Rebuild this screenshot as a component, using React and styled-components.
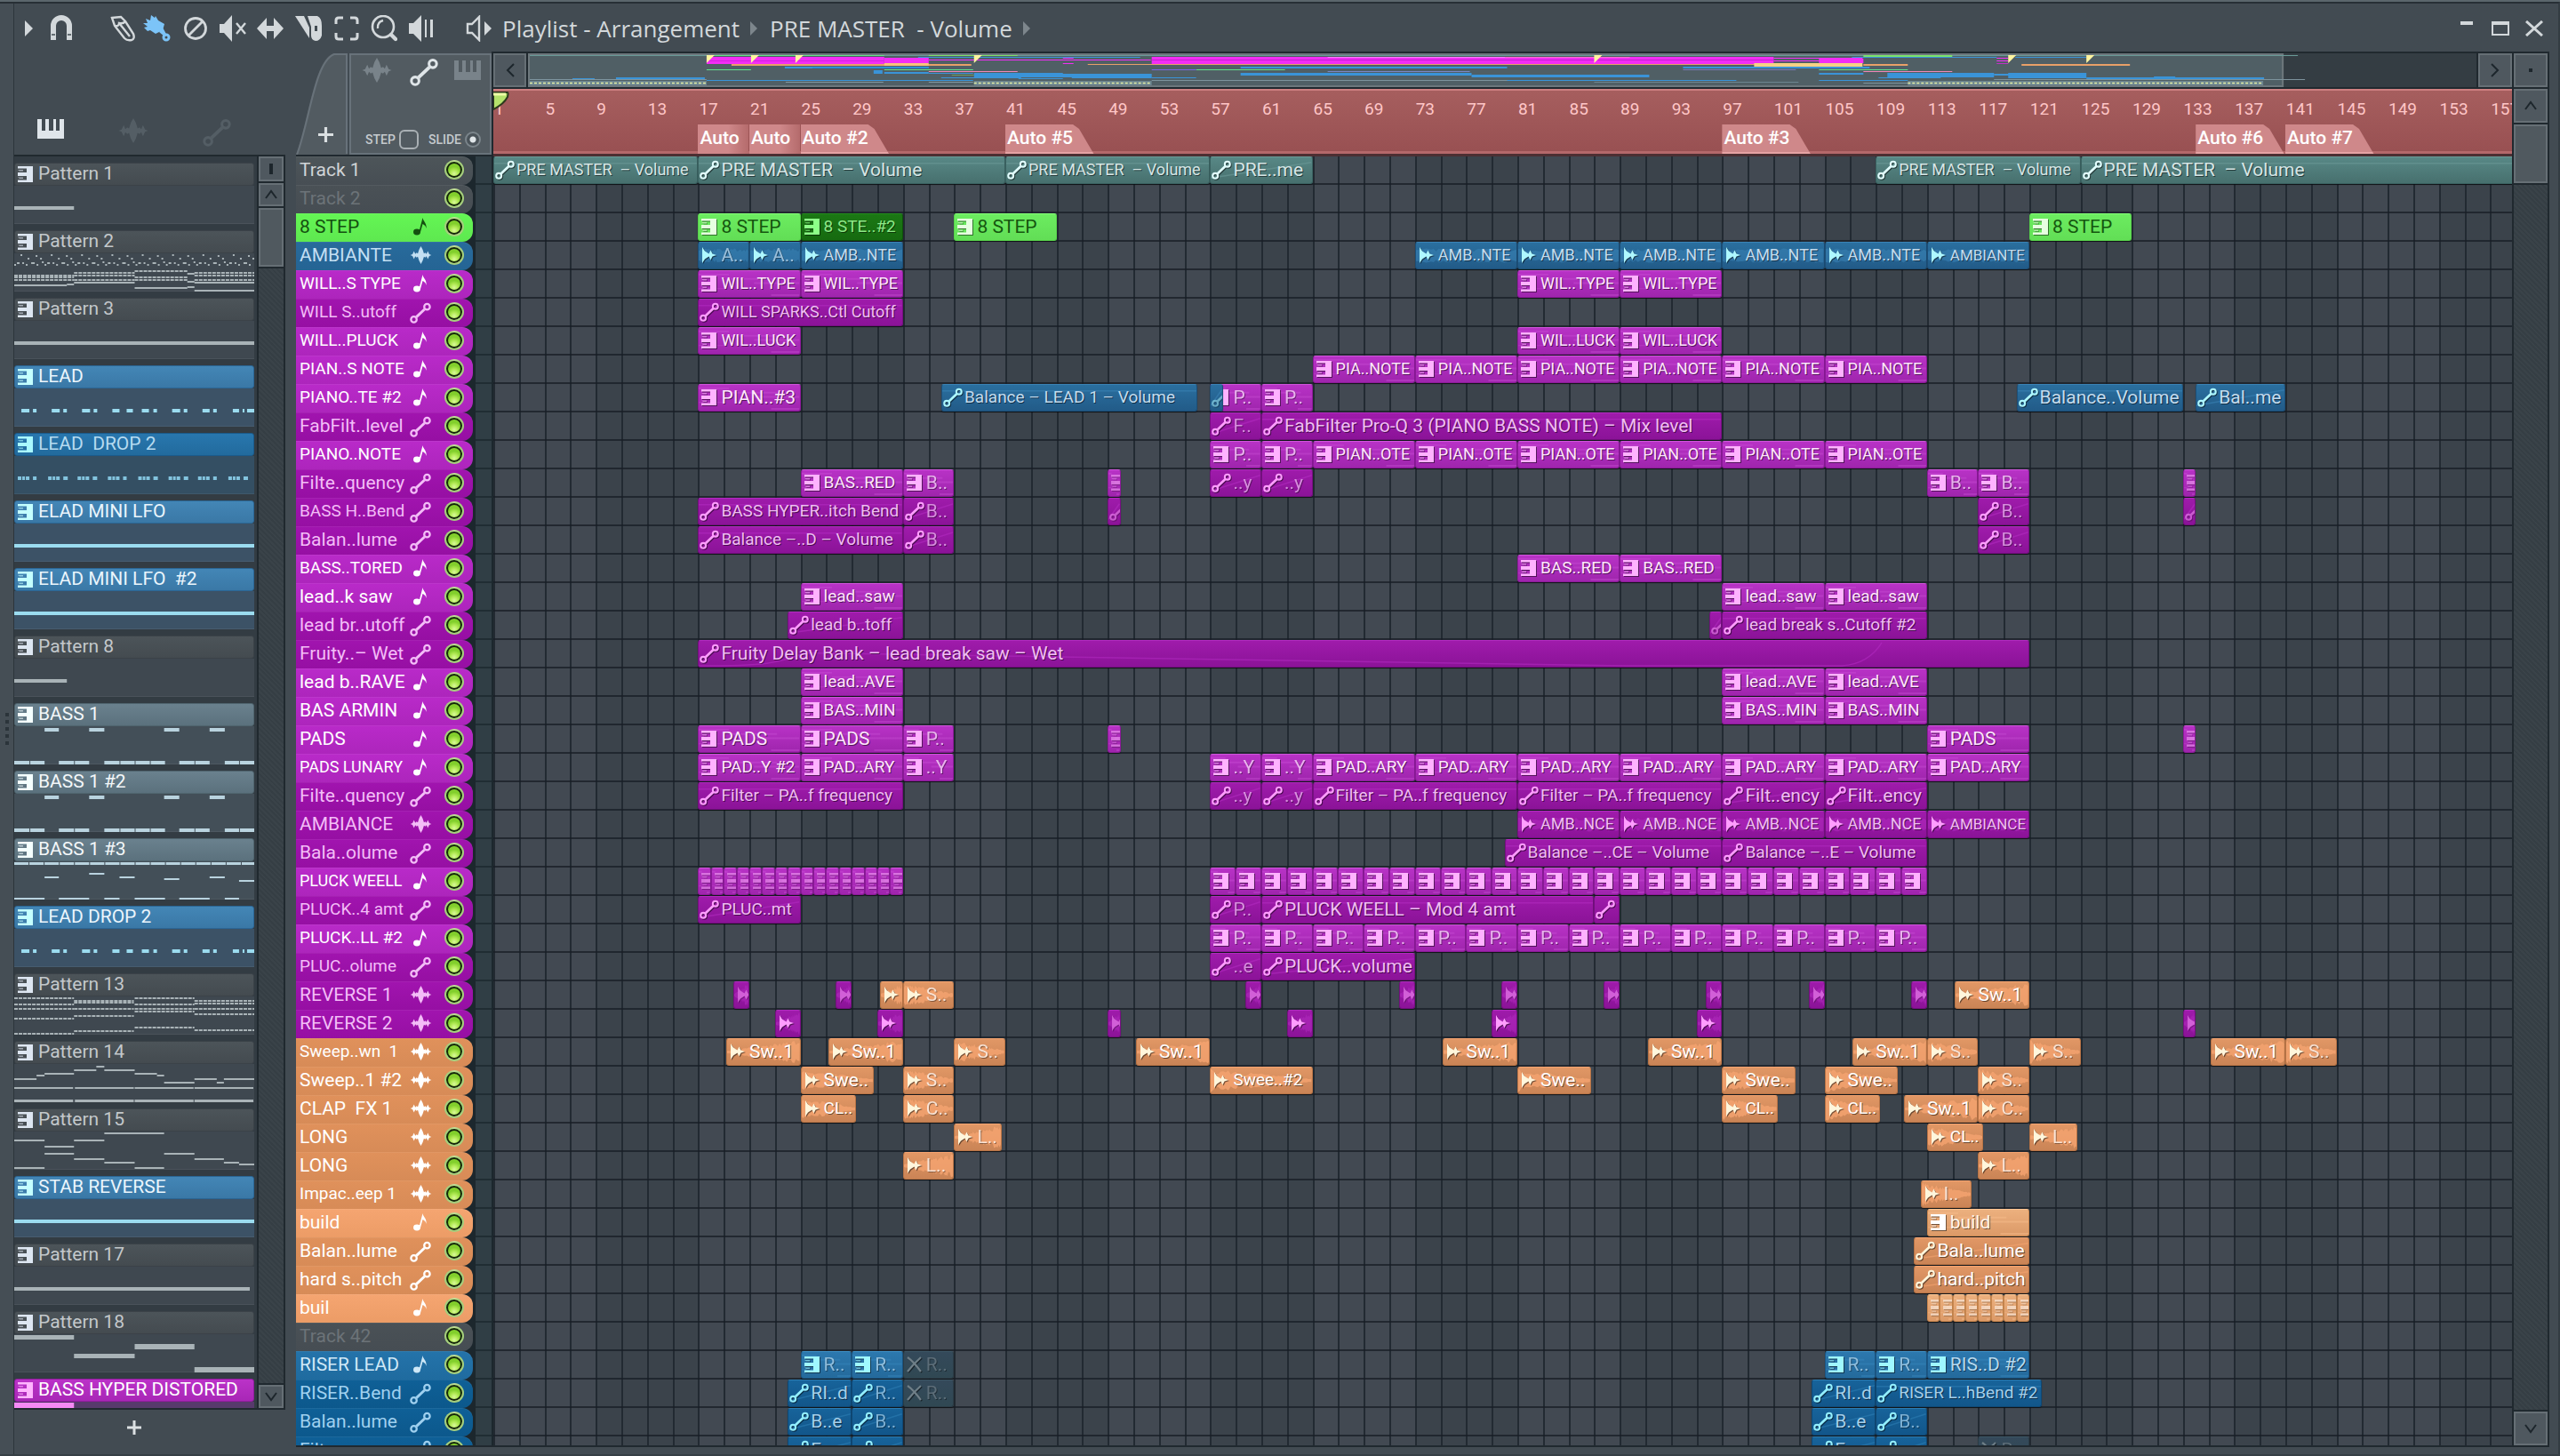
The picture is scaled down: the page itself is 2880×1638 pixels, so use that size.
import React from "react";
import styled, { createGlobalStyle, css } from "styled-components";

const BARS = 160;
const BAR_WIDTH = 2304 / BARS;
const FONT = '"Roboto", "Open Sans", sans-serif';

const GlobalStyle = createGlobalStyle`
  * { box-sizing: border-box; }
  body { margin: 0; background: #424b52; }
  button { font: inherit; color: inherit; margin: 0; padding: 0; border: 0; background: none; }
`;

/* picks the largest label size that fits the room a label has */
const LABEL_SIZES = [21, 19, 18, 17, 16];
const ruler = document.createElement("canvas").getContext("2d");
function fitSize(text, room) {
  return LABEL_SIZES.find((size) => {
    ruler.font = `${size}px Roboto`;
    return ruler.measureText(text).width <= room;
  }) || LABEL_SIZES[LABEL_SIZES.length - 1];
}

/* ---------- palettes ---------- */

const CLIP = {
  teal: { top: "#588886", bottom: "#47706e", edge: "#3a6261", text: "#d6e6e6", icon: "#e2ffff", mark: "#6c9a98" },
  green: { top: "#6cec60", bottom: "#62de56", edge: "#58d24c", text: "#15560f", icon: "#e6ffe0", mark: "#85ff78" },
  forest: { top: "#1b7814", bottom: "#166a10", edge: "#0f520b", text: "#8de887", icon: "#8dff88", mark: "#238c1b" },
  sky: { top: "#2a6f9f", bottom: "#225b88", edge: "#1c4f78", text: "#c3dcef", icon: "#aef8ff", mark: "#3a83b6" },
  pink: { top: "#b832c6", bottom: "#9f25ad", edge: "#8b1a98", text: "#ffe6ff", icon: "#ffb2ff", mark: "#cf55da" },
  violet: { top: "#9f1bab", bottom: "#8b1398", edge: "#750f80", text: "#f0bdf4", icon: "#ff9dff", mark: "#b22bc0" },
  orange: { top: "#e19765", bottom: "#ca8456", edge: "#b87446", text: "#ffffff", icon: "#fff6dc", mark: "#f5a470" },
  peach: { top: "#ecb07e", bottom: "#dc9a68", edge: "#c9874f", text: "#fff6ec", icon: "#ffffff", mark: "#ffc795" },
  azure: { top: "#2c78ae", bottom: "#246a9c", edge: "#1c5886", text: "#b6d9ef", icon: "#9ff8ff", mark: "#3d8fc6" },
  navy: { top: "#17639a", bottom: "#12568a", edge: "#0e4875", text: "#a5cfea", icon: "#93efff", mark: "#2c7db3" },
  muted: { top: "#34495a", bottom: "#304853", edge: "#2b3c46", text: "#6d7c86", icon: "#6f7f88", mark: "#3c5665" },
};

const HEAD = {
  grey: { top: "#4d5559", bottom: "#474e54", text: "#d0d4d6" },
  empty: { top: "#4a5156", bottom: "#464d53", text: "#6c7378" },
  green: { top: "#64f654", bottom: "#5ee850", text: "#145010" },
  sky: { top: "#286b9c", bottom: "#256494", text: "#c2dff3" },
  pink: { top: "#b92ac9", bottom: "#ad25bc", text: "#ffffff" },
  violet: { top: "#a114af", bottom: "#960fa3", text: "#f3bdf7" },
  orange: { top: "#e0915b", bottom: "#d78b57", text: "#ffffff" },
  peach: { top: "#f5a571", bottom: "#ec9c66", text: "#ffffff" },
  azure: { top: "#2473aa", bottom: "#1f6b9f", text: "#cfe8f7" },
  navy: { top: "#0f6097", bottom: "#0c588c", text: "#9fd0ef" },
};

const PATTERN = {
  grey: { top: "#4c5459", bottom: "#444b50", edge: "#3b4248", text: "#c3c8cb", icon: "#dde6f1", body: "#3f4850", note: "#a9b3b7" },
  blue: { top: "#4386b6", bottom: "#3a78a6", edge: "#2b6695", text: "#eaf5fc", icon: "#c4ffff", body: "#3c5266", note: "#9bdcf0" },
  deep: { top: "#2877ae", bottom: "#226b9d", edge: "#1b5b8b", text: "#b5daf0", icon: "#a9f9ff", body: "#344f63", note: "#83c4de" },
  steel: { top: "#6a818e", bottom: "#5b717d", edge: "#50656f", text: "#f3f7f9", icon: "#f4ffff", body: "#434f58", note: "#b9d3df" },
  pink: { top: "#bb32c8", bottom: "#a827b6", edge: "#8f1d9c", text: "#ffffff", icon: "#ffb4ff", body: "#573a6c", note: "#f58af5" },
};

/* ---------- note drawings of the pattern list: [x, y, width, height] ---------- */

const fullLine = [[0, 23, 269, 4]];
const leadNotes = [
  [8, 9], [21, 4], [42, 9], [55, 4], [76, 9], [89, 4], [110, 8], [126, 7], [143, 8],
  [156, 4], [177, 9], [190, 4], [211, 8], [223, 4], [245, 7], [256, 2], [261, 8],
].map(([x, w]) => [x, 23, w, 4]);
const dropNotes = Array.from({ length: 8 }).flatMap((_, i) => {
  const x = Math.round(i * 33.7) + 4;
  return [[x, 23, 4, 4], [x + 5, 23, 3, 4], [x + 9, 23, 4, 4], [x + 17, 23, i % 3 ? 5 : 4, 4]];
});
const bassNotes = [
  [34, 2, 16, 4], [84, 2, 17, 4], [168, 2, 17, 4], [219, 2, 17, 4],
  [0, 39, 17, 4], [18, 39, 16, 4], [50, 39, 17, 4], [68, 39, 16, 4], [101, 39, 17, 4], [119, 39, 16, 4],
  [136, 39, 16, 4], [153, 39, 16, 4], [185, 39, 17, 4], [203, 39, 16, 4], [236, 39, 16, 4], [253, 39, 16, 4],
];
const bassThree = [
  ...Array.from({ length: 16 }).map((_, i) => [i * 17, 1, 16, 3]),
  [34, 17, 16, 2], [84, 13, 17, 2], [118, 17, 17, 2], [168, 19, 17, 2], [219, 17, 17, 2], [252, 21, 17, 2],
  [0, 41, 34, 2], [50, 41, 34, 2], [101, 41, 17, 2], [135, 41, 34, 2], [185, 41, 34, 2], [236, 41, 16, 2],
];
const dash = (x0, x1, y, h = 2, step = 5) => {
  const out = [];
  for (let x = x0; x < x1; x += step) out.push([x, y, Math.min(step - 1, x1 - x), h]);
  return out;
};
const patternTwo = [
  ...Array.from({ length: 8 }).flatMap((_, i) => {
    const x = i * 34;
    return [[x, 12, 2, 2], [x + 3, 10, 3, 2], [x + 7, 1, 2, 2], [x + 9, 10, 2, 2], [x + 13, 12, 2, 2], [x + 15, 5, 2, 2],
      [x + 19, 10, 4, 2], [x + 24, 2, 2, 2], [x + 25, 12, 2, 2], [x + 29, 5, 2, 2], [x + 31, 9, 2, 2]];
  }),
  ...[24, 26, 29].flatMap((y) => dash(0, 67, y)), ...[21, 24, 29].flatMap((y) => dash(67, 135, y)),
  ...[19, 26, 29].flatMap((y) => dash(135, 194, y)), ...[21, 24, 29].flatMap((y) => dash(202, 269, y)),
  [0, 35, 59, 2], [59, 34, 8, 2], [67, 32, 68, 2], [135, 38, 59, 2], [194, 22, 8, 2], [194, 31, 8, 2], [194, 37, 8, 2],
  [202, 32, 67, 2], [202, 41, 67, 2],
];
const patternThirteen = [[0, [2, 9, 14, 25, 42]], [67, [5, 7, 14, 22, 39]], [135, [2, 9, 14, 17, 35]], [202, [5, 8, 14, 20, 38]]]
  .flatMap(([x, ys]) => ys.flatMap((y) => dash(x, x + 67, y - 1)));
const patternFourteen = [
  [0, 16, 25, 2], [25, 12, 9, 2], [34, 10, 33, 2], [67, 6, 25, 2], [92, 2, 9, 2], [101, 6, 34, 2], [135, 10, 25, 2],
  [160, 12, 8, 2], [168, 20, 34, 2], [202, 16, 25, 2], [227, 20, 8, 2], [235, 16, 34, 2],
  ...[0, 68, 135, 202].flatMap((x) => [[x, 26, 66, 2], [x, 40, 66, 3]]),
];
const patternFifteen = [
  [0, 9, 34, 2], [34, 16, 33, 2], [67, 9, 34, 2], [101, 1, 67, 2], [34, 24, 33, 2], [67, 30, 34, 2], [101, 34, 34, 2],
  [0, 40, 34, 2], [135, 40, 33, 2], [168, 24, 34, 2], [202, 30, 33, 2], [235, 34, 17, 2], [252, 36, 17, 2],
];

const PATTERNS = [
  ["Pattern 1", "grey", [[0, 23, 67, 4]]],
  ["Pattern 2", "grey", patternTwo],
  ["Pattern 3", "grey", fullLine],
  ["LEAD", "blue", leadNotes],
  ["LEAD  DROP 2", "deep", dropNotes],
  ["ELAD MINI LFO", "blue", fullLine],
  ["ELAD MINI LFO  #2", "blue", fullLine],
  ["Pattern 8", "grey", [[0, 23, 59, 4]]],
  ["BASS 1", "steel", bassNotes],
  ["BASS 1 #2", "steel", bassNotes],
  ["BASS 1 #3", "steel", bassThree],
  ["LEAD DROP 2", "blue", leadNotes],
  ["Pattern 13", "grey", patternThirteen],
  ["Pattern 14", "grey", patternFourteen],
  ["Pattern 15", "grey", patternFifteen],
  ["STAB REVERSE", "blue", fullLine],
  ["Pattern 17", "grey", [[0, 23, 264, 4]]],
  ["Pattern 18", "grey", [[0, 1, 67, 5], [67, 22, 68, 5], [135, 11, 67, 6], [202, 37, 67, 6]]],
  ["BASS HYPER DISTORED", "pink", [[0, 1, 67, 6]]],
];

/* ---------- tracks: [name, head colour, head icon, clips] ---------- */
/* a clip is [kind, colour, first bar, end bar, label]; kinds: p pattern, a automation, w audio, x muted */

const run = (kind, colour, from, to, step, label) => {
  const out = [];
  for (let b = from; b < to; b += step) out.push([kind, colour, b, b + step, label]);
  return out;
};

const TRACKS = [
  ["Track 1", "grey", "", [["a", "teal", 1, 17, "PRE MASTER  – Volume"], ["a", "teal", 17, 41, "PRE MASTER  – Volume"],
    ["a", "teal", 41, 57, "PRE MASTER  – Volume"], ["a", "teal", 57, 65, "PRE..me"],
    ["a", "teal", 109, 125, "PRE MASTER  – Volume"], ["a", "teal", 125, 160, "PRE MASTER  – Volume"]]],
  ["Track 2", "empty", "", []],
  ["8 STEP", "green", "p", [["p", "green", 17, 25, "8 STEP"], ["p", "forest", 25, 33, "8 STE..#2"], ["p", "green", 37, 45, "8 STEP"], ["p", "green", 121, 129, "8 STEP"]]],
  ["AMBIANTE", "sky", "w", [["w", "sky", 17, 21, "A.."], ["w", "sky", 21, 25, "A.."], ["w", "sky", 25, 33, "AMB..NTE"],
    ...run("w", "sky", 73, 113, 8, "AMB..NTE"), ["w", "sky", 113, 121, "AMBIANTE"]]],
  ["WILL..S TYPE", "pink", "p", [...run("p", "pink", 17, 33, 8, "WIL..TYPE"), ...run("p", "pink", 81, 97, 8, "WIL..TYPE")]],
  ["WILL S..utoff", "violet", "a", [["a", "violet", 17, 33, "WILL SPARKS..Ctl Cutoff"]]],
  ["WILL..PLUCK", "pink", "p", [["p", "pink", 17, 25, "WIL..LUCK"], ...run("p", "pink", 81, 97, 8, "WIL..LUCK")]],
  ["PIAN..S NOTE", "pink", "p", run("p", "pink", 65, 113, 8, "PIA..NOTE")],
  ["PIANO..TE #2", "pink", "p", [["p", "pink", 17, 25, "PIAN..#3"], ["a", "sky", 36, 56, "Balance – LEAD 1 – Volume"],
    ...run("p", "pink", 57, 65, 4, "P.."), ["a", "sky", 57, 58, ""], ["a", "sky", 120, 133, "Balance..Volume"], ["a", "sky", 134, 141, "Bal..me"]]],
  ["FabFilt..level", "violet", "a", [["a", "violet", 57, 61, "F.."], ["a", "violet", 61, 97, "FabFilter Pro-Q 3 (PIANO BASS NOTE) – Mix level"]]],
  ["PIANO..NOTE", "pink", "p", [...run("p", "pink", 57, 65, 4, "P.."), ...run("p", "pink", 65, 113, 8, "PIAN..OTE")]],
  ["Filte..quency", "violet", "a", [["p", "pink", 25, 33, "BAS..RED"], ["p", "pink", 33, 37, "B.."], ["p", "pink", 49, 50, ""],
    ...run("a", "violet", 57, 65, 4, "..y"), ...run("p", "pink", 113, 121, 4, "B.."), ["p", "pink", 133, 134, ""]]],
  ["BASS H..Bend", "violet", "a", [["a", "violet", 17, 33, "BASS HYPER..itch Bend"], ["a", "violet", 33, 37, "B.."], ["a", "violet", 49, 50, ""],
    ["a", "violet", 117, 121, "B.."], ["a", "violet", 133, 134, ""]]],
  ["Balan..lume", "violet", "a", [["a", "violet", 17, 33, "Balance –..D – Volume"], ["a", "violet", 33, 37, "B.."], ["a", "violet", 117, 121, "B.."]]],
  ["BASS..TORED", "pink", "p", run("p", "pink", 81, 97, 8, "BAS..RED")],
  ["lead..k saw", "pink", "p", [["p", "pink", 25, 33, "lead..saw"], ...run("p", "pink", 97, 113, 8, "lead..saw")]],
  ["lead br..utoff", "violet", "a", [["a", "violet", 24, 33, "lead b..toff"], ["a", "violet", 96, 97, ""], ["a", "violet", 97, 113, "lead break s..Cutoff #2"]]],
  ["Fruity..– Wet", "violet", "a", [["a", "violet", 17, 121, "Fruity Delay Bank – lead break saw – Wet"]]],
  ["lead b..RAVE", "pink", "p", [["p", "pink", 25, 33, "lead..AVE"], ...run("p", "pink", 97, 113, 8, "lead..AVE")]],
  ["BAS ARMIN", "pink", "p", [["p", "pink", 25, 33, "BAS..MIN"], ...run("p", "pink", 97, 113, 8, "BAS..MIN")]],
  ["PADS", "pink", "p", [...run("p", "pink", 17, 33, 8, "PADS"), ["p", "pink", 33, 37, "P.."], ["p", "pink", 49, 50, ""],
    ["p", "pink", 113, 121, "PADS"], ["p", "pink", 133, 134, ""]]],
  ["PADS LUNARY", "pink", "p", [["p", "pink", 17, 25, "PAD..Y #2"], ["p", "pink", 25, 33, "PAD..ARY"], ["p", "pink", 33, 37, "..Y"],
    ...run("p", "pink", 57, 65, 4, "..Y"), ...run("p", "pink", 65, 121, 8, "PAD..ARY")]],
  ["Filte..quency", "violet", "a", [["a", "violet", 17, 33, "Filter – PA..f frequency"], ...run("a", "violet", 57, 65, 4, "..y"),
    ...run("a", "violet", 65, 97, 16, "Filter – PA..f frequency"), ...run("a", "violet", 97, 113, 8, "Filt..ency")]],
  ["AMBIANCE", "violet", "w", [...run("w", "violet", 81, 113, 8, "AMB..NCE"), ["w", "violet", 113, 121, "AMBIANCE"]]],
  ["Bala..olume", "violet", "a", [["a", "violet", 80, 97, "Balance –..CE – Volume"], ["a", "violet", 97, 113, "Balance –..E – Volume"]]],
  ["PLUCK WEELL", "pink", "p", [...run("p", "pink", 17, 33, 1, ""), ...run("p", "pink", 57, 113, 2, "")]],
  ["PLUCK..4 amt", "violet", "a", [["a", "violet", 17, 25, "PLUC..mt"], ["a", "violet", 57, 61, "P.."], ["a", "violet", 61, 87, "PLUCK WEELL – Mod 4 amt"], ["a", "violet", 87, 89, ""]]],
  ["PLUCK..LL #2", "pink", "p", run("p", "pink", 57, 113, 4, "P..")],
  ["PLUC..olume", "violet", "a", [["a", "violet", 57, 61, "..e"], ["a", "violet", 61, 73, "PLUCK..volume"]]],
  ["REVERSE 1", "violet", "w", [...[21, 29, 61, 73, 81, 89, 97, 105, 113].map((e) => ["w", "violet", e - 1.25, e, ""]),
    ["w", "orange", 31.2, 33, ""], ["w", "orange", 33, 37, "S.."], ["w", "orange", 115.2, 121, "Sw..1"]]],
  ["REVERSE 2", "violet", "w", [...[23, 31, 63, 79, 95].map((s) => ["w", "violet", s, s + 2, ""]), ["w", "violet", 49, 50, ""], ["w", "violet", 133, 134, ""]]],
  ["Sweep..wn  1", "orange", "w", [...[25, 33, 57, 81, 97, 113, 141].map((e) => ["w", "orange", e - 5.8, e, "Sw..1"]),
    ...[37, 113, 121, 141].map((s) => ["w", "orange", s, s + 4, "S.."])]],
  ["Sweep..1 #2", "orange", "w", [...[25, 81, 97, 105].map((s) => ["w", "orange", s, s + 5.75, "Swe.."]),
    ["w", "orange", 33, 37, "S.."], ["w", "orange", 57, 65, "Swee..#2"], ["w", "orange", 117, 121, "S.."]]],
  ["CLAP  FX 1", "orange", "w", [...[25, 97, 105].map((s) => ["w", "orange", s, s + 4.35, "CL.."]),
    ["w", "orange", 33, 37, "C.."], ["w", "orange", 111.2, 117, "Sw..1"], ["w", "orange", 117, 121, "C.."]]],
  ["LONG", "orange", "w", [["w", "orange", 37, 40.75, "L.."], ["w", "orange", 113, 117.4, "CL.."], ["w", "orange", 121, 124.75, "L.."]]],
  ["LONG", "orange", "w", [["w", "orange", 33, 37, "L.."], ["w", "orange", 117, 121, "L.."]]],
  ["Impac..eep 1", "orange", "w", [["w", "orange", 112.5, 116.5, "I.."]]],
  ["build", "peach", "p", [["p", "peach", 113, 121, "build"]]],
  ["Balan..lume", "orange", "a", [["a", "orange", 112, 121, "Bala..lume"]]],
  ["hard s..pitch", "orange", "a", [["a", "orange", 112, 121, "hard..pitch"]]],
  ["buil", "peach", "p", run("p", "peach", 113, 121, 1, "")],
  ["Track 42", "empty", "", []],
  ["RISER LEAD", "azure", "p", [...run("p", "azure", 25, 33, 4, "R.."), ["x", "muted", 33, 37, "R.."], ...run("p", "azure", 105, 113, 4, "R.."), ["p", "azure", 113, 121, "RIS..D #2"]]],
  ["RISER..Bend", "navy", "a", [["a", "navy", 24, 29, "RI..d"], ["a", "navy", 29, 33, "R.."], ["x", "muted", 33, 37, "R.."], ["a", "navy", 104, 109, "RI..d"], ["a", "navy", 109, 122, "RISER L..hBend #2"]]],
  ["Balan..lume", "navy", "a", [["a", "navy", 24, 29, "B..e"], ["a", "navy", 29, 33, "B.."], ["a", "navy", 104, 109, "B..e"], ["a", "navy", 109, 113, "B.."]]],
  ["Filte..uency", "navy", "a", [["a", "navy", 24, 29, "F..y"], ["a", "navy", 29, 33, "..y"], ["a", "navy", 104, 109, "F..y"], ["a", "navy", 109, 113, "..y"], ["x", "muted", 117, 121, "R.."]]],
];

const MARKERS = [[17, "Auto"], [21, "Auto"], [25, "Auto #2"], [41, "Auto #5"], [97, "Auto #3"], [134, "Auto #6"], [141, "Auto #7"]];

/* ---------- icons ---------- */

const KeysIcon = ({ w = 17, h = 18 }) => (
  <svg width={w} height={h} viewBox="0 0 17 18" fill="currentColor" preserveAspectRatio="none">
    <path d="M0 0H17V18H0V15.5H10V11H0V7H10V2.5H0Z" />
    <path d="M0 4H6V5.5H2ZM0 12.5H6V14H2Z" opacity="0.6" />
  </svg>
);
const LinkIcon = ({ size = 21 }) => (
  <svg width={size} height={size} viewBox="0 0 21 21" fill="none" stroke="currentColor" strokeWidth="2">
    <circle cx="4" cy="17" r="2.8" />
    <circle cx="17" cy="4.5" r="2.8" />
    <path d="M6.5 14.5L14.5 7" strokeWidth="2.6" />
  </svg>
);
const ClipWaveIcon = () => (
  <svg width="17" height="18" viewBox="0 0 17 18" fill="currentColor">
    <path d="M1 0L4 4.5L8.5 7.5L10.5 3.5L12.5 7.5L17 9L12.5 10.5L10.5 14.5L8.5 10.5L4 13.5L1 18Z" />
  </svg>
);
const WaveIcon = ({ w = 25, h = 20 }) => (
  <svg width={w} height={h} viewBox="0 0 26 22" fill="currentColor">
    <path d="M0 11L2.6 10L4.5 6L6 9.6L7.6 8L9.2 9L10.8 4L13 0L15.2 4L16.8 9L18.4 8L20 9.6L21.5 6L23.4 10L26 11L23.4 12L21.5 16L20 12.4L18.4 14L16.8 13L15.2 18L13 22L10.8 18L9.2 13L7.6 14L6 12.4L4.5 16L2.6 12Z" />
  </svg>
);
const NoteIcon = () => (
  <svg width="16" height="20" viewBox="0 0 16 20" fill="currentColor">
    <ellipse cx="4" cy="16" rx="4" ry="3.4" />
    <path d="M6.3 16L10.5 0C11 4 15.5 6 14.5 12C14 8.5 11.5 7.5 10.5 7L8 16Z" />
  </svg>
);
const PianoIcon = () => (
  <svg width="30" height="22" viewBox="0 0 30 22" fill="currentColor">
    <path d="M0 0H5V13H9V0H13V13H18V0H21V13H25V0H30V22H0Z" />
  </svg>
);
const CrossIcon = () => (
  <svg width="17" height="18" viewBox="0 0 17 18" fill="none" stroke="currentColor" strokeWidth="2.2">
    <path d="M1 1Q8 6 16 17M16 1Q8 8 1 17" />
  </svg>
);
const Chevron = ({ d }) => (
  <svg width="16" height="16" viewBox="0 0 16 16" fill="none" stroke="#1d262c" strokeWidth="2"><path d={d} /></svg>
);
const UP = "M2 12L8 4L14 12";
const DOWN = "M2 4L8 12L14 4";
const LEFT = "M12 1L5 8L12 15";
const RIGHT = "M4 1L11 8L4 15";

const TOOLS = [
  ["Draw", 34, <svg key="i" width="28" height="30" viewBox="0 0 28 30" fill="none" stroke="currentColor" strokeWidth="2.4"><path d="M2 3L12 2L17 7L26 21Q28 27 24 28Q19 29 16 26L5 12ZM5 12Q10 13 10 9Q15 10 17 7M10 9L22 24" /></svg>],
  ["Paint", 44, <svg key="i" width="32" height="30" viewBox="0 0 32 30" fill="#7cc4f8"><path d="M9 0L13 3L14 1L17 6L24 10L22 17L14 21L8 17L5 18L1 14L5 13L0 9L5 9L3 4L8 6Z" /><path d="M22 14L27 23L24 24L18 19Z" /><circle cx="26" cy="25" r="3" fill="none" stroke="#7cc4f8" strokeWidth="3" /></svg>],
  ["Delete", 42, <svg key="i" width="28" height="28" viewBox="0 0 28 28" fill="none" stroke="currentColor" strokeWidth="2.8"><circle cx="14" cy="14" r="11.5" /><path d="M22 6L6 22" /></svg>],
  ["Mute", 42, <svg key="i" width="32" height="30" viewBox="0 0 32 30" fill="currentColor"><path d="M1 10H6L15 0V30L6 20H1Z" /><path d="M20 9L30 21M30 9L20 21" stroke="currentColor" strokeWidth="2.4" fill="none" /></svg>],
  ["Slip", 42, <svg key="i" width="30" height="26" viewBox="0 0 30 26" fill="currentColor"><path d="M0 13L11 1V10H19V1L30 13L19 25V16H11V25Z" /></svg>],
  ["Slice", 44, <svg key="i" width="30" height="30" viewBox="0 0 30 30" fill="currentColor"><path d="M0 1H10L16 14V26Z" /><path fillRule="evenodd" d="M14 1H25Q30 3 30 12V23Q28 29 23 29Q18 28 18 23V13ZM22 12V18H25V12Z" /></svg>],
  ["Select", 42, <svg key="i" width="28" height="28" viewBox="0 0 28 28" fill="none" stroke="currentColor" strokeWidth="3"><path d="M10 2H5Q2 2 2 5V9M18 2H23Q26 2 26 5V9M10 26H5Q2 26 2 23V19M18 26H23Q26 26 26 23V19" /></svg>],
  ["Zoom", 42, <svg key="i" width="30" height="30" viewBox="0 0 30 30" fill="none" stroke="currentColor"><circle cx="14" cy="13" r="12" strokeWidth="2.6" /><path d="M8 15Q7 8 14 6" strokeWidth="2.4" /><path d="M23 22L28 27" strokeWidth="4.4" strokeLinecap="round" /></svg>],
  ["Playback", 42, <svg key="i" width="30" height="30" viewBox="0 0 30 30" fill="currentColor"><path d="M1 9H6L15 0V30L6 21H1Z" /><path d="M19 5H21V25H19ZM25 5H28V25H25Z" /></svg>],
];

/* ---------- window ---------- */

const Window = styled.div`
  display: flex;
  flex-direction: column;
  height: 100vh;
  overflow: hidden;
  background: #424b52;
  font-family: ${FONT};
  font-size: 21px;
  color: #cfd4d7;
  border-top: 2px solid #5b666c;
  border-bottom: 2px solid #363f45;
`;
const Frame = styled.div`
  display: flex;
  flex: 1;
  min-height: 0;
  border-top: 2px solid #272f35;
  border-right: 2px solid #333c42;
`;
const Gutter = styled.div`
  width: 16px;
  display: flex;
  flex-direction: column;
  align-items: center;
  justify-content: center;
  gap: 4px;
  border-right: 1px solid #2c353b;
  background: #454e55;
`;
const Grip = styled.span`
  width: 4px;
  height: 4px;
  background: #2b343a;
`;
const Page = styled.div`
  flex: 1;
  min-width: 0;
  display: flex;
  flex-direction: column;
`;

const TitleBar = styled.header`
  height: 54px;
  flex: none;
  display: flex;
  align-items: center;
  padding: 2px 8px 0 12px;
  color: #d3d8db;
`;
const ToolButton = styled.button`
  width: ${(p) => p.$w}px;
  height: 36px;
  display: grid;
  place-items: center;
  color: inherit;
`;
const Tools = styled.div`
  display: flex;
  margin: 0 18px 0 20px;
`;
const Crumb = styled.h1`
  margin: 0;
  font: 400 26px/32px "Open Sans", "Noto Sans", sans-serif;
  white-space: pre;
`;
const Arrow = styled.svg`
  margin: 0 14px 0 12px;
  flex: none;
`;
const WindowButtons = styled.div`
  margin-left: auto;
  display: flex;
`;

const Body = styled.div`
  flex: 1;
  min-height: 0;
  display: flex;
`;

/* ---------- pattern picker ---------- */

const Picker = styled.aside`
  width: 305px;
  flex: none;
  display: flex;
  flex-direction: column;
  margin-right: 12px;
`;
const PickerTabs = styled.div`
  height: 116px;
  display: flex;
  align-items: flex-end;
  padding: 0 0 17px 26px;
  gap: 58px;
  flex: none;
`;
const PickerTab = styled.button`
  height: 24px;
  display: grid;
  place-items: center;
  color: ${(p) => (p.$on ? "#dfe5ea" : "#545e65")};
`;
const PickerBox = styled.div`
  flex: 1;
  min-height: 0;
  display: flex;
  border-top: 2px solid #20292f;
  border-bottom: 2px solid #20292f;
  border-right: 2px solid #20292f;
  background: #333c43;
`;
const PatternList = styled.ul`
  flex: 1;
  min-width: 0;
  margin: 0;
  padding: 7px 3px 0 0;
  list-style: none;
  overflow: hidden;
  border-right: 2px solid #20292f;
`;
const PatternItem = styled.li`
  height: 76px;
`;
const PatternHead = styled.button`
  width: 100%;
  height: 26px;
  display: flex;
  align-items: center;
  gap: 6px;
  padding: 0 3px;
  border: 1px solid ${(p) => p.$c.edge};
  border-radius: 3px;
  background: linear-gradient(${(p) => p.$c.top}, ${(p) => p.$c.bottom});
  color: ${(p) => p.$c.text};
  svg { color: ${(p) => p.$c.icon}; flex: none; }
`;
const PatternName = styled.span`
  font-size: 21px;
  line-height: 22px;
  padding-bottom: 3px;
  white-space: pre;
`;
const PatternBody = styled.div`
  height: 43px;
  background: ${(p) => p.$c.body};
  border-bottom: 1px solid rgba(255, 255, 255, 0.06);
  svg { display: block; width: 100%; fill: ${(p) => p.$c.note}; }
`;
const PickerFoot = styled.div`
  height: 50px;
  flex: none;
  display: flex;
  align-items: center;
  justify-content: center;
  padding: 0 35px 8px 0;
`;

/* ---------- scroll bars ---------- */

const ScrollColumn = styled.div`
  width: ${(p) => p.$w}px;
  flex: none;
  display: flex;
  flex-direction: column;
  gap: 2px;
  background: #20292f;
  padding: ${(p) => (p.$rail ? "2px 2px 0" : "0")};
`;
const ScrollButton = styled.button`
  height: ${(p) => p.$h}px;
  width: ${(p) => (p.$w ? p.$w + "px" : "auto")};
  flex: none;
  display: grid;
  place-items: center;
  background: #4f585f;
  border: 2px solid #666f75;
`;
const ScrollThumb = styled.div`
  height: 66px;
  flex: none;
  background: #50595f;
  border: 2px solid #666f75;
`;
const ScrollTrack = styled.div`
  flex: 1;
  background: repeating-linear-gradient(45deg, #353e44 0 2px, #3a4349 2px 4px);
`;
const Pip = styled.span`
  width: 4px;
  height: ${(p) => p.$h}px;
  background: #1d262c;
`;

/* ---------- arrangement ---------- */

const Arrangement = styled.main`
  flex: 1;
  min-width: 0;
  display: flex;
  margin: 0 10px 8px 0;
  border-bottom: 2px solid #20292f;
`;
const HeadColumn = styled.div`
  width: 222px;
  flex: none;
  display: flex;
  flex-direction: column;
`;
const Corner = styled.div`
  height: 118px;
  flex: none;
  display: flex;
  gap: 2px;
  padding-top: 2px;
  border-bottom: 2px solid #20292f;
  border-right: 2px solid #20292f;
`;
const AddTab = styled.button`
  width: 58px;
  svg { display: block; }
`;
const CornerPanel = styled.div`
  flex: 1;
  display: flex;
  flex-direction: column;
  justify-content: space-between;
  padding: 3px 10px 3px 10px;
  background: #525b61;
  border: 2px solid #68727a;
`;
const CornerRow = styled.div`
  display: flex;
  align-items: center;
  justify-content: space-between;
  color: #79838a;
`;
const CornerIcon = styled.button`
  height: 28px;
  display: grid;
  place-items: center;
  color: ${(p) => (p.$on ? "#dfe5e8" : "#79838a")};
`;
const SnapLabel = styled.label`
  display: flex;
  align-items: center;
  gap: 4px;
  padding-left: 6px;
  font: 500 14px/24px ${FONT};
  color: #c5cace;
`;
const StepBox = styled.input`
  appearance: none;
  margin: 0;
  width: 22px;
  height: 22px;
  border: 2px solid #a9b0b4;
  border-radius: 6px;
`;
const SlideDot = styled.input`
  appearance: none;
  margin: 0;
  width: 18px;
  height: 18px;
  border: 2px solid #7b858b;
  border-radius: 50%;
  background: radial-gradient(circle, #dfe5e8 0 3px, #4a5359 4px);
`;

const TrackHeads = styled.div`
  flex: 1;
  min-height: 0;
  overflow: hidden;
  background: #1c272d;
  border-right: 2px solid #1c272d;
`;
const TrackRow = styled.div`
  height: 32px;
  display: flex;
  gap: 3px;
`;
const TrackHead = styled.div`
  flex: 1;
  min-width: 0;
  display: flex;
  align-items: center;
  padding: 0 10px 2px 4px;
  border-radius: 0 12px 12px 0;
  background: linear-gradient(${(p) => p.$c.top}, ${(p) => p.$c.bottom});
  box-shadow: inset 0 1px 0 rgba(255, 255, 255, 0.06);
  color: ${(p) => p.$c.text};
`;
const TrackMeter = styled.div`
  width: 18px;
  background: #303e45;
  border-bottom: 2px solid #202d33;
`;
const TrackName = styled.span`
  flex: 1;
  min-width: 0;
  white-space: pre;
  font-size: ${(p) => p.$size}px;
  line-height: 28px;
`;
const TrackKind = styled.span`
  width: 26px;
  height: 22px;
  display: grid;
  place-items: center;
  margin-right: 14px;
`;
const Led = styled.input`
  appearance: none;
  margin: 0;
  width: 22px;
  height: 22px;
  border-radius: 50%;
  border: 2px solid rgba(200, 205, 205, 0.5);
  background: radial-gradient(circle at 50% 75%, #d9f99a 0, #b2ea55 4px, #82cf2c 8px);
  box-shadow: inset 0 0 0 2px #15260c;
`;

const TimeColumn = styled.div`
  flex: 1;
  min-width: 0;
  display: flex;
  flex-direction: column;
  overflow: hidden;
`;
const OverviewRow = styled.div`
  height: 42px;
  flex: none;
  display: flex;
  gap: 2px;
  padding: 2px 0;
  background: #20292f;
`;
const Overview = styled.div`
  flex: 1;
  min-width: 0;
  background: #343d43;
  svg { display: block; width: 100%; height: 38px; }
`;
const Ruler = styled.div`
  height: 76px;
  flex: none;
  position: relative;
  border-top: 2px solid #cd7f80;
  border-bottom: 3px solid #4c2f33;
  background: linear-gradient(#a65e5e, #985052);
  box-shadow: inset 0 -3px 0 #b4686a;
  overflow: hidden;
`;
const Canvas = styled.div`
  width: 2304px;
  position: relative;
`;
const RulerNumbers = styled.div`
  display: flex;
  padding-top: 7px;
`;
const RulerNumber = styled.span`
  flex: 1 0 0;
  min-width: 0;
  padding-left: 1px;
  color: #ffc6c7;
  font-size: 19px;
  line-height: 28px;
`;
const Marker = styled.button`
  position: absolute;
  top: 38px;
  width: 100px;
  height: 34px;
  padding: 0 2px 5px;
  text-align: left;
  color: #fff;
  font-size: 21px;
  font-weight: 500;
  line-height: 26px;
  background: linear-gradient(#cf888a 0 31px, #e6a3a4 31px);
  clip-path: polygon(0 0, 76px 0, 83px 5px, 100% 100%, 0 100%);
  overflow: hidden;
  ${(p) => p.$short && css`
    width: 57px;
    clip-path: none;
    background: linear-gradient(90deg, #cf888a 60%, #b56b6c 100%);
  `}
`;
const Playhead = styled.svg`
  position: absolute;
  left: 0;
  top: 1px;
`;
const Lanes = styled.div`
  flex: 1;
  min-height: 0;
  overflow: hidden;
`;
const GridLayer = styled.div`
  position: absolute;
  inset: 0;
  display: flex;
`;
const GridBlock = styled.div`
  flex: 1;
  display: flex;
  background: ${(p) => (p.$light ? "#424952" : "#3b434b")};
`;
const GridCell = styled.div`
  flex: 1;
  border-left: 2px solid #222a32;
`;
const Lane = styled.div`
  height: 32px;
  position: relative;
  border-bottom: 2px solid rgba(24, 30, 38, 0.75);
`;
const Clip = styled.div`
  position: absolute;
  top: 0;
  height: 31px;
  display: flex;
  align-items: center;
  overflow: hidden;
  padding: 0 0 1px ${(p) => (p.$link ? 1 : 3)}px;
  border: 1px solid ${(p) => p.$c.edge};
  border-top-color: ${(p) => p.$c.mark};
  border-radius: 3px;
  background: linear-gradient(${(p) => p.$c.top}, ${(p) => p.$c.bottom});
  box-shadow: 0 1px 1px rgba(0, 0, 0, 0.5);
  color: ${(p) => p.$c.text};
`;
const ClipArt = styled.svg`
  position: absolute;
  inset: 0;
  width: 100%;
  height: 100%;
  color: ${(p) => p.$c.mark};
`;
const ClipIcon = styled.span`
  position: relative;
  width: ${(p) => (p.$link ? 24 : 22)}px;
  height: 21px;
  flex: none;
  display: flex;
  align-items: center;
  color: ${(p) => p.$c.icon};
  opacity: ${(p) => (p.$tiny ? 0.5 : 1)};
  filter: drop-shadow(1px 1px 0 rgba(0, 0, 0, 0.5));
`;
const ClipLabel = styled.span`
  position: relative;
  white-space: pre;
  font-size: ${(p) => p.$size}px;
  line-height: 28px;
  opacity: ${(p) => (p.$short ? 0.72 : 1)};
  text-shadow: 1px 1px 0 rgba(0, 0, 0, ${(p) => (p.$flat ? 0 : 0.5)});
`;

/* ---------- pieces ---------- */

function waveShape(seed, fade) {
  let top = "";
  let bottom = "";
  for (let i = 0; i <= 40; i += 1) {
    const n = Math.abs(Math.sin(i * 12.9 + seed * 7.7) * 43758.5) % 1;
    const env = fade ? 0.15 + 0.85 * (fade > 0 ? i / 40 : 1 - i / 40) : 0.6;
    const a = 14 * env * (0.55 + 0.45 * n);
    top += `${i ? "L" : "M"}${i * 2.5} ${15 - a}`;
    bottom = `L${i * 2.5} ${15 + a}${bottom}`;
  }
  return `${top}${bottom}Z`;
}

function Art({ clip }) {
  const [kind, colour, start, end, label] = clip;
  const c = CLIP[colour];
  let drawing = null;
  if (kind === "w") {
    const fade = colour === "sky" || label.startsWith("AMB") ? 0 : /^(Sw\.|L|$)/.test(label) ? 1 : -1;
    drawing = <path d={waveShape(start, fade)} fill="currentColor" opacity={colour === "orange" ? 0.8 : 0.55} />;
  } else if (kind === "a") {
    const d = end - start > 100
      ? "M0 29C5 29 6 26 8 14L70 29L86 29Q88 27 89 2"
      : end - start > 12 ? "M0 7H100" : "M0 24L100 6";
    drawing = <path d={d} fill="none" stroke="currentColor" strokeWidth="1.5" vectorEffect="non-scaling-stroke" opacity="0.6" />;
  } else if (kind === "p" && colour !== "green" && colour !== "forest") {
    drawing = <path d="M0 3H30V5H0ZM30 8H78V10H30ZM55 13H100V15H55ZM0 20H25V21H0ZM72 27H100V29H72Z" fill="currentColor" opacity="0.35" />;
  }
  return <ClipArt $c={c} viewBox="0 0 100 30" preserveAspectRatio="none" aria-hidden="true">{drawing}</ClipArt>;
}

function ClipView({ clip }) {
  const [kind, colour, start, end, label] = clip;
  const c = CLIP[colour];
  const length = end - start;
  const tiny = length < 1.5;
  const link = kind === "a";
  return (
    <Clip $c={c} $link={link} style={{ left: `${((start - 1) / BARS) * 100}%`, width: `${(length / BARS) * 100}%` }}>
      <Art clip={clip} />
      <ClipIcon $c={c} $tiny={tiny} $link={link}>
        {kind === "p" && <KeysIcon />}
        {kind === "a" && <LinkIcon size={22} />}
        {kind === "w" && <ClipWaveIcon />}
        {kind === "x" && <CrossIcon />}
      </ClipIcon>
      {label && (
        <ClipLabel $size={fitSize(label, length * BAR_WIDTH - 29)} $short={length <= 4} $flat={colour === "green"}>{label}</ClipLabel>
      )}
    </Clip>
  );
}

const KIND_ICON = { p: <NoteIcon />, a: <LinkIcon size={24} />, w: <WaveIcon /> };

/* overview strip: [colour, x, y, width, height] */
const M = "#f22df5";
const B = "#3a94d8";
const O = "#e8a068";
const G = "#62e38a";
const OVERVIEW = [
  ["#699a98", 2, 2, 1990, 1], [G, 201, 2, 200, 1], ["#7be36a", 451, 2, 100, 1], ["#7be36a", 1503, 2, 100, 2],
  [M, 201, 4, 200, 8], ["#d41fe0", 201, 8, 200, 1], [M, 401, 5, 50, 6], [M, 451, 7, 250, 1], [M, 602, 5, 12, 1], [M, 602, 7, 12, 1], [M, 602, 11, 12, 1],
  [M, 702, 4, 700, 8], ["#c61dd2", 702, 7, 700, 1], ["#ff7bff", 900, 4, 200, 1], ["#ff6dd0", 1100, 4, 140, 1], [M, 1402, 5, 100, 1], [M, 1402, 8, 100, 1], [M, 1453, 6, 50, 5],
  [M, 1653, 5, 13, 1], [M, 1653, 8, 13, 1], ["#c030c8", 1653, 11, 13, 1],
  [B, 439, 4, 250, 1], [B, 1490, 4, 163, 1], [B, 1674, 4, 80, 1],
  [O, 229, 12, 270, 2], ["#f7c27c", 401, 11, 50, 3], [O, 630, 12, 770, 1], ["#f5d285", 1380, 11, 122, 4], [O, 1503, 12, 50, 2], [O, 1681, 12, 122, 2],
  [B, 289, 15, 162, 2], ["#1f86d0", 320, 16, 130, 1], [B, 802, 15, 300, 2], [B, 1300, 15, 210, 2],
  [G, 201, 18, 50, 1], [G, 401, 18, 100, 1], [G, 752, 18, 100, 1], [G, 1453, 18, 100, 1], ["#7a68e0", 702, 18, 50, 1], ["#7a78b8", 1300, 18, 127, 1],
  ["#f089b8", 451, 20, 100, 1], ["#f089b8", 1503, 20, 100, 1], [B, 389, 19, 10, 4], [B, 401, 21, 50, 2], [B, 1453, 22, 50, 2],
  [B, 451, 22, 50, 1], ["#6f9a5c", 477, 24, 25, 1], [B, 465, 27, 90, 1], [B, 502, 22, 100, 5], [B, 555, 23, 110, 4], [B, 612, 23, 90, 5], [B, 552, 28, 50, 1], [B, 702, 27, 50, 1],
  [B, 802, 22, 260, 3], [B, 1062, 24, 200, 3], ["#7a88c8", 900, 20, 160, 1],
  [B, 1530, 22, 120, 5], [B, 1520, 27, 70, 1], [B, 1666, 22, 88, 6], [B, 1650, 23, 20, 2], [B, 1754, 27, 200, 2], [B, 1830, 26, 24, 3],
  [B, 50, 28, 25, 1], [B, 99, 27, 100, 2], [B, 201, 30, 300, 1], [B, 1100, 30, 260, 1], [B, 1453, 30, 100, 1], ["#7d939c", 1503, 33, 50, 1], ["#7d939c", 1650, 29, 350, 1], ["#7d939c", 702, 30, 400, 1],
  ["#7f96a0", 2, 29, 199, 1], ["#6c8590", 2, 31, 199, 5], ["#7f96a0", 290, 32, 110, 1], ["#7f96a0", 451, 32, 50, 1],
  ["#6c8590", 502, 31, 200, 5], ["#6c8590", 1553, 31, 400, 5], ["#6c8590", 1200, 32, 230, 1],
];
const DOTS = [[2, 201], [502, 702], [1553, 1953]];
const FLAGS = [201, 251, 301, 502, 1200, 1666, 1754];

function OverviewMap() {
  return (
    <svg viewBox="0 0 2193 38" preserveAspectRatio="none" role="img" aria-label="Arrangement overview">
      <rect x="1" y="1" width="1974" height="36" fill="#505f65" stroke="#6d777c" strokeWidth="2" />
      {OVERVIEW.map(([fill, x, y, w, h], i) => <rect key={i} x={x} y={y} width={w} height={h} fill={fill} />)}
      {DOTS.map(([a, b]) => <path key={a} d={`M${a} 33.5H${b}`} stroke="#e6f0a4" strokeWidth="1.5" strokeDasharray="3 2" />)}
      {FLAGS.map((x) => <path key={x} d={`M${x} 2H${x + 9}L${x} 11Z`} fill="#fff5a0" />)}
    </svg>
  );
}

const PlusIcon = ({ x = 0, y = 0, s = 16 }) => (
  <svg x={x} y={y} width={s} height={s} viewBox="0 0 16 16" fill="#dbe0e2"><path d="M6.5 0H9.5V6.5H16V9.5H9.5V16H6.5V9.5H0V6.5H6.5Z" /></svg>
);

const Separator = () => <Arrow width="8" height="16" viewBox="0 0 8 16"><path d="M0 0L8 8L0 16Z" fill="#7d868c" /></Arrow>;

export default function App() {
  return (
    <Window>
      <GlobalStyle />
      <Frame>
        <Gutter>{[0, 1, 2, 3, 4].map((i) => <Grip key={i} />)}</Gutter>
        <Page>
          <TitleBar>
            <ToolButton $w={9} aria-label="Menu"><svg width="9" height="18" viewBox="0 0 9 18"><path d="M0 0L9 9L0 18Z" fill="currentColor" /></svg></ToolButton>
            <ToolButton $w={64} aria-label="Snap">
              <svg width="28" height="30" viewBox="0 0 28 30" fill="none" stroke="currentColor" strokeWidth="6">
                <path d="M5 28V12A9 9 0 0 1 23 12V28" />
                <path d="M3 22H7M21 22H25" stroke="#424b52" strokeWidth="1.5" />
              </svg>
            </ToolButton>
            <Tools>
              {TOOLS.map(([name, w, icon]) => <ToolButton key={name} $w={w} aria-label={name}>{icon}</ToolButton>)}
            </Tools>
            <ToolButton $w={52} aria-label="Source">
              <svg width="30" height="30" viewBox="0 0 30 30" fill="none" stroke="currentColor" strokeWidth="2.4"><path d="M2 10H7L15 2V28L7 20H2Z" /><path d="M21 7L29 15L21 23Z" fill="currentColor" stroke="none" /></svg>
            </ToolButton>
            <Crumb>Playlist - Arrangement</Crumb>
            <Separator />
            <Crumb as="span">PRE MASTER  - Volume</Crumb>
            <Separator />
            <WindowButtons>
              <ToolButton $w={38} aria-label="Minimize"><svg width="14" height="24" viewBox="0 0 14 24"><path d="M0 4H14V8H0Z" fill="currentColor" /></svg></ToolButton>
              <ToolButton $w={38} aria-label="Maximize"><svg width="20" height="16" viewBox="0 0 20 16"><path d="M1 2H19V15H1Z" fill="none" stroke="currentColor" strokeWidth="2" /><path d="M0 0H20V4H0Z" fill="currentColor" /></svg></ToolButton>
              <ToolButton $w={38} aria-label="Close"><svg width="20" height="18" viewBox="0 0 20 18"><path d="M1 1L19 17M19 1L1 17" stroke="currentColor" strokeWidth="3" /></svg></ToolButton>
            </WindowButtons>
          </TitleBar>

          <Body>
            <Picker>
              <PickerTabs>
                <PickerTab $on aria-label="Patterns"><PianoIcon /></PickerTab>
                <PickerTab aria-label="Audio clips"><WaveIcon w={40} h={28} /></PickerTab>
                <PickerTab aria-label="Automation clips"><LinkIcon size={32} /></PickerTab>
              </PickerTabs>
              <PickerBox>
                <PatternList>
                  {PATTERNS.map(([name, tone, notes]) => (
                    <PatternItem key={name}>
                      <PatternHead $c={PATTERN[tone]}><KeysIcon /><PatternName>{name}</PatternName></PatternHead>
                      <PatternBody $c={PATTERN[tone]}>
                        <svg height="43" viewBox="0 0 269 43" preserveAspectRatio="none" aria-hidden="true">
                          {notes.map(([x, y, w, h], i) => <rect key={i} x={x} y={y} width={w} height={h} />)}
                        </svg>
                      </PatternBody>
                    </PatternItem>
                  ))}
                </PatternList>
                <ScrollColumn $w={28}>
                  <ScrollButton $h={28} aria-label="Picker options"><Pip $h={12} /></ScrollButton>
                  <ScrollButton $h={26} aria-label="Scroll up"><Chevron d={UP} /></ScrollButton>
                  <ScrollThumb />
                  <ScrollTrack />
                  <ScrollButton $h={26} aria-label="Scroll down"><Chevron d={DOWN} /></ScrollButton>
                </ScrollColumn>
              </PickerBox>
              <PickerFoot><button aria-label="Add pattern"><PlusIcon /></button></PickerFoot>
            </Picker>

            <Arrangement>
              <HeadColumn>
                <Corner>
                  <AddTab aria-label="Add track">
                    <svg width="58" height="114" viewBox="0 0 58 114">
                      <path d="M0 114C14 78 20 8 42 0H58V114Z" fill="#525b61" />
                      <path d="M1 114C15 78 21 9 43 1H57V113" fill="none" stroke="#68727a" strokeWidth="2" />
                      <PlusIcon x={25} y={83} s={17} />
                    </svg>
                  </AddTab>
                  <CornerPanel>
                    <CornerRow>
                      <CornerIcon aria-label="Show audio"><WaveIcon w={38} h={28} /></CornerIcon>
                      <CornerIcon $on aria-label="Show automation"><LinkIcon size={32} /></CornerIcon>
                      <CornerIcon aria-label="Show patterns"><PianoIcon /></CornerIcon>
                    </CornerRow>
                    <CornerRow>
                      <SnapLabel>STEP<StepBox type="checkbox" /></SnapLabel>
                      <SnapLabel>SLIDE<SlideDot type="radio" defaultChecked /></SnapLabel>
                    </CornerRow>
                  </CornerPanel>
                </Corner>
                <TrackHeads>
                  {TRACKS.map(([name, tone, kind], i) => (
                    <TrackRow key={i}>
                      <TrackHead $c={HEAD[tone]}>
                        <TrackName $size={fitSize(name, 120)}>{name}</TrackName>
                        <TrackKind>{KIND_ICON[kind]}</TrackKind>
                        <Led type="checkbox" defaultChecked aria-label={`Enable ${name}`} />
                      </TrackHead>
                      <TrackMeter />
                    </TrackRow>
                  ))}
                </TrackHeads>
              </HeadColumn>

              <TimeColumn>
                <OverviewRow>
                  <ScrollButton $h={38} $w={37} aria-label="Scroll left"><Chevron d={LEFT} /></ScrollButton>
                  <Overview><OverviewMap /></Overview>
                  <ScrollButton $h={38} $w={38} aria-label="Scroll right"><Chevron d={RIGHT} /></ScrollButton>
                </OverviewRow>
                <Ruler>
                  <Canvas>
                    <RulerNumbers>
                      {Array.from({ length: 40 }).map((_, i) => <RulerNumber key={i}>{i * 4 + 1}</RulerNumber>)}
                    </RulerNumbers>
                    {MARKERS.map(([bar, text]) => (
                      <Marker key={bar} $short={text === "Auto"} style={{ left: `${((bar - 1) / BARS) * 100}%` }}>{text}</Marker>
                    ))}
                    <Playhead width="18" height="22" viewBox="0 0 18 22">
                      <path d="M0 1H16Q17 1 16 6Q12 14 0 20Z" fill="#b4e26c" stroke="#2c3a1c" strokeWidth="2" />
                      <path d="M0 3H14" stroke="#efffa8" strokeWidth="3" />
                    </Playhead>
                  </Canvas>
                </Ruler>
                <Lanes>
                  <Canvas>
                    <GridLayer aria-hidden="true">
                      {Array.from({ length: 20 }).map((_, i) => (
                        <GridBlock key={i} $light={i % 2 === 0}>
                          <GridCell /><GridCell /><GridCell /><GridCell />
                        </GridBlock>
                      ))}
                    </GridLayer>
                    {TRACKS.map(([, , , clips], i) => (
                      <Lane key={i}>{clips.map((clip, j) => <ClipView key={j} clip={clip} />)}</Lane>
                    ))}
                  </Canvas>
                </Lanes>
              </TimeColumn>

              <ScrollColumn $w={42} $rail>
                <ScrollButton $h={38} aria-label="Options"><Pip $h={4} /></ScrollButton>
                <ScrollButton $h={38} aria-label="Scroll up"><Chevron d={UP} /></ScrollButton>
                <ScrollThumb />
                <ScrollTrack />
                <ScrollButton $h={38} aria-label="Scroll down"><Chevron d={DOWN} /></ScrollButton>
              </ScrollColumn>
            </Arrangement>
          </Body>
        </Page>
      </Frame>
    </Window>
  );
}
